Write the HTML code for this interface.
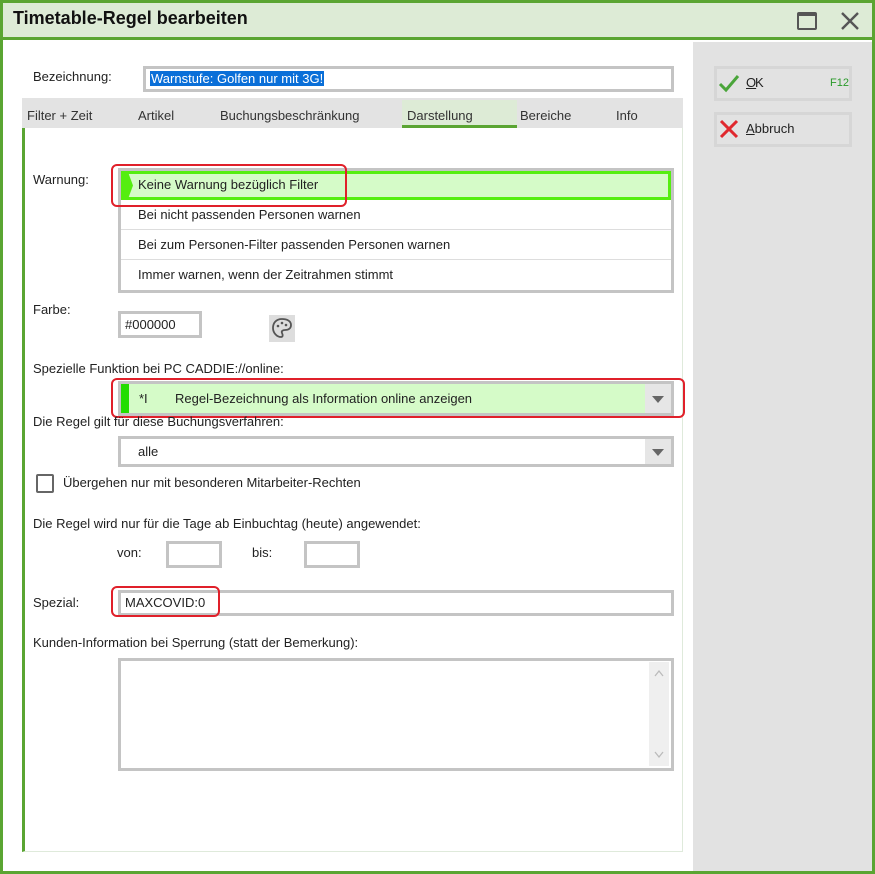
<!DOCTYPE html>
<html><head><meta charset="utf-8"><style>
*{box-sizing:border-box;margin:0;padding:0}
body{width:875px;height:874px;position:relative;background:#fff;font-family:"Liberation Sans",sans-serif;font-size:13px;color:#222;overflow:hidden}
.a{position:absolute}
.t{position:absolute;white-space:nowrap}
.box{position:absolute;border:3px solid #c4c4c4;background:#fff}
.red{position:absolute;border:2px solid #e0202a;border-radius:6px}
</style></head><body>
<!-- outer frame -->
<div class="a" style="left:0;top:0;width:875px;height:874px;border:3px solid #5aa532"></div>
<div class="a" style="left:3px;top:3px;width:869px;height:37px;background:#ddebd6;border-bottom:3px solid #5aa532"></div>
<div class="t" style="left:13px;top:8px;font-size:18px;font-weight:bold;color:#111">Timetable-Regel bearbeiten</div>
<!-- maximize icon -->
<div class="a" style="left:797px;top:12px;width:20px;height:18px;border:2px solid #555;border-top-width:4px;border-radius:2px"></div>
<svg class="a" style="left:840px;top:11px" width="20" height="20"><path d="M2 2L18 18M18 2L2 18" stroke="#555" stroke-width="2.4"/></svg>
<!-- right panel -->
<div class="a" style="left:693px;top:42px;width:179px;height:829px;background:#e2e2e2"></div>
<div class="a" style="left:714px;top:66px;width:138px;height:35px;border:3px solid #d6d6d6;background:#e2e2e2"></div>
<svg class="a" style="left:718px;top:73px" width="22" height="20"><path d="M2 11L8 17L20 3" stroke="#4aa53a" stroke-width="3" fill="none"/></svg>
<div class="t" style="left:746px;top:75px;text-decoration:underline 1px">O</div><div class="t" style="left:755px;top:75px">K</div>
<div class="t" style="left:830px;top:77px;font-size:11px;color:#2a9a2a">F12</div>
<div class="a" style="left:714px;top:112px;width:138px;height:35px;border:3px solid #d6d6d6;background:#e2e2e2"></div>
<svg class="a" style="left:719px;top:119px" width="20" height="20"><path d="M2 2L18 18M18 2L2 18" stroke="#e0282e" stroke-width="3"/></svg>
<div class="t" style="left:746px;top:121px"><u>A</u>bbruch</div>
<!-- Bezeichnung -->
<div class="t" style="left:33px;top:69px">Bezeichnung:</div>
<div class="box" style="left:143px;top:66px;width:531px;height:26px"></div>
<div class="t" style="left:150px;top:71px;background:#0a6fd8;color:#fff;padding:0 1px;line-height:15px">Warnstufe: Golfen nur mit 3G!</div>
<!-- tabs -->
<div class="a" style="left:22px;top:98px;width:661px;height:30px;background:#e3e3e3"></div>
<div class="a" style="left:402px;top:100px;width:115px;height:28px;background:#ddebd6;border-bottom:3px solid #5aa532"></div>
<div class="t" style="left:27px;top:108px;color:#333">Filter + Zeit</div>
<div class="t" style="left:138px;top:108px;color:#333">Artikel</div>
<div class="t" style="left:220px;top:108px;color:#333">Buchungsbeschränkung</div>
<div class="t" style="left:407px;top:108px;color:#333">Darstellung</div>
<div class="t" style="left:520px;top:108px;color:#333">Bereiche</div>
<div class="t" style="left:616px;top:108px;color:#333">Info</div>
<!-- tab panel -->
<div class="a" style="left:22px;top:128px;width:661px;height:724px;border-left:3px solid #5aa532;border-right:1px solid #dfeadb;border-bottom:1px solid #dfeadb"></div>
<!-- Warnung -->
<div class="t" style="left:33px;top:172px">Warnung:</div>
<div class="box" style="left:118px;top:168px;width:556px;height:125px"></div>
<div class="a" style="left:121px;top:171px;width:550px;height:29px;background:#d5fbc8;border:3px solid #55ee10"></div>
<svg class="a" style="left:122px;top:172px" width="12" height="27"><path d="M0 0H6L11 13.5L6 27H0Z" fill="#55ee10"/></svg>
<div class="t" style="left:138px;top:177px">Keine Warnung bezüglich Filter</div>
<div class="a" style="left:121px;top:229px;width:550px;height:1px;background:#ddd"></div>
<div class="a" style="left:121px;top:259px;width:550px;height:1px;background:#ddd"></div>
<div class="t" style="left:138px;top:207px">Bei nicht passenden Personen warnen</div>
<div class="t" style="left:138px;top:237px">Bei zum Personen-Filter passenden Personen warnen</div>
<div class="t" style="left:138px;top:267px">Immer warnen, wenn der Zeitrahmen stimmt</div>
<div class="red" style="left:111px;top:164px;width:236px;height:43px"></div>
<!-- Farbe -->
<div class="t" style="left:33px;top:302px">Farbe:</div>
<div class="box" style="left:118px;top:311px;width:84px;height:27px"></div>
<div class="t" style="left:125px;top:317px">#000000</div>
<div class="a" style="left:269px;top:315px;width:26px;height:27px;background:#ddd"></div>
<svg class="a" style="left:270px;top:316px" width="24" height="24"><path d="M12 3C6 3 3 7 3 12C3 17 7 21 11 21C13 21 13 19 12 17C11 15 13 14 15 14C19 14 21 12 21 9C21 5 17 3 12 3Z" fill="none" stroke="#555" stroke-width="1.8"/><circle cx="8" cy="10" r="1.3" fill="#555"/><circle cx="12" cy="7" r="1.3" fill="#555"/><circle cx="16" cy="9" r="1.3" fill="#555"/></svg>
<!-- Spezielle Funktion -->
<div class="t" style="left:33px;top:361px">Spezielle Funktion bei PC CADDIE://online:</div>
<div class="box" style="left:118px;top:381px;width:556px;height:35px;background:#d5fbc8"></div>
<div class="a" style="left:121px;top:384px;width:8px;height:29px;background:#22dd00"></div>
<div class="a" style="left:645px;top:384px;width:26px;height:29px;background:#e6e6e6"></div>
<svg class="a" style="left:651px;top:394px" width="14" height="10"><path d="M1 2H13L7 9Z" fill="#666"/></svg>
<div class="t" style="left:139px;top:391px">*I</div>
<div class="t" style="left:175px;top:391px">Regel-Bezeichnung als Information online anzeigen</div>
<div class="red" style="left:111px;top:378px;width:574px;height:40px"></div>
<div class="t" style="left:33px;top:414px">Die Regel gilt für diese Buchungsverfahren:</div>
<div class="box" style="left:118px;top:436px;width:556px;height:31px"></div>
<div class="a" style="left:645px;top:439px;width:26px;height:25px;background:#e6e6e6"></div>
<svg class="a" style="left:651px;top:447px" width="14" height="10"><path d="M1 2H13L7 9Z" fill="#666"/></svg>
<div class="t" style="left:138px;top:444px">alle</div>
<div class="a" style="left:36px;top:474px;width:18px;height:19px;border:2px solid #666;border-radius:2px"></div>
<div class="t" style="left:63px;top:475px">Übergehen nur mit besonderen Mitarbeiter-Rechten</div>
<div class="t" style="left:33px;top:516px">Die Regel wird nur für die Tage ab Einbuchtag (heute) angewendet:</div>
<div class="t" style="left:117px;top:545px">von:</div>
<div class="box" style="left:166px;top:541px;width:56px;height:27px"></div>
<div class="t" style="left:252px;top:545px">bis:</div>
<div class="box" style="left:304px;top:541px;width:56px;height:27px"></div>
<div class="t" style="left:33px;top:595px">Spezial:</div>
<div class="box" style="left:118px;top:590px;width:556px;height:26px"></div>
<div class="t" style="left:125px;top:595px">MAXCOVID:0</div>
<div class="red" style="left:111px;top:586px;width:109px;height:31px"></div>
<div class="t" style="left:33px;top:635px">Kunden-Information bei Sperrung (statt der Bemerkung):</div>
<div class="box" style="left:118px;top:658px;width:556px;height:113px"></div>
<div class="a" style="left:649px;top:662px;width:20px;height:104px;background:#efefef"></div>
<svg class="a" style="left:653px;top:668px" width="12" height="10"><path d="M2 8L6 3L10 8" stroke="#bbb" fill="none" stroke-width="1.3"/></svg>
<svg class="a" style="left:653px;top:750px" width="12" height="10"><path d="M2 2L6 7L10 2" stroke="#bbb" fill="none" stroke-width="1.3"/></svg>
</body></html>
